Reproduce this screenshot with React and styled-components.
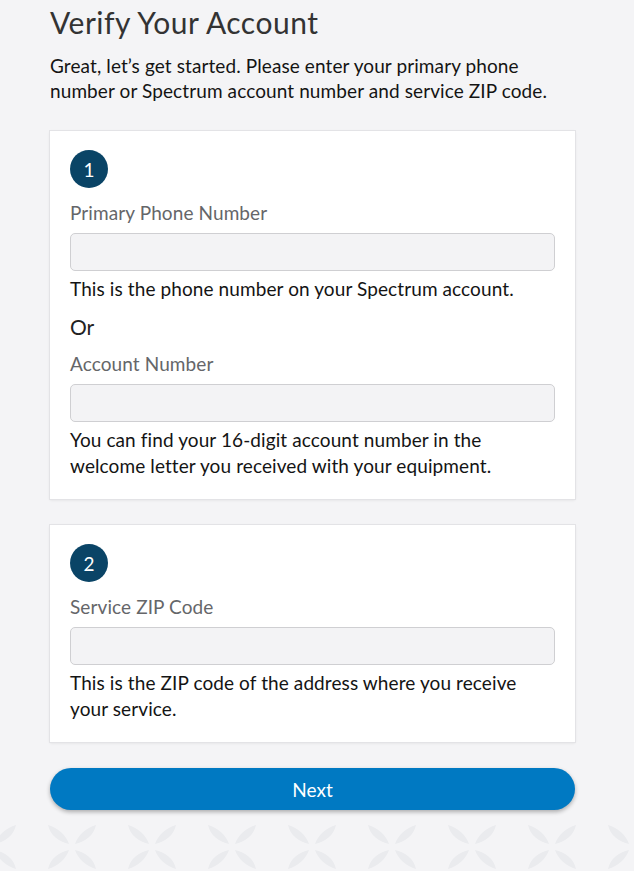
import React from "react";
import styled, { createGlobalStyle } from "styled-components";

const Global = createGlobalStyle`
  html, body { margin: 0; padding: 0; }
  body {
    background: #f4f4f6;
    font-family: Lato, "Open Sans", sans-serif;
    color: #1d1d1f;
    min-height: 871px;
  }
`;

const Page = styled.div`
  position: relative;
  min-height: 871px;
  overflow: hidden;
`;

const Pattern = styled.svg`
  position: absolute;
  left: 0;
  bottom: 0;
  width: 100%;
  height: 60px;
  z-index: 0;
`;

const Main = styled.main`
  position: relative;
  z-index: 1;
  width: 525px;
  padding: 4px 0 0 50px;
  display: flex;
  flex-direction: column;
`;

const Title = styled.h1`
  margin: 0;
  font-size: 30px;
  font-weight: 400;
  color: #333;
  line-height: 36px;
  letter-spacing: 0.5px;
`;

const Intro = styled.p`
  margin: 13px 0 0;
  font-size: 19px;
  line-height: 25px;
  letter-spacing: 0.1px;
  color: #141414;
`;

const Card = styled.section`
  margin-top: ${(p) => p.$top}px;
  background: #fff;
  box-shadow: 0 0 0 1px #e3e3e6, 0 1px 3px rgba(0, 0, 0, 0.1);
  padding: 19px 20px 20px;
  display: flex;
  flex-direction: column;
`;

const Step = styled.div`
  width: 38px;
  height: 38px;
  border-radius: 50%;
  background: #0a4466;
  color: #fff;
  font-size: 19px;
  display: flex;
  align-items: center;
  justify-content: center;
`;

const Label = styled.label`
  margin-top: 13px;
  font-size: 19px;
  line-height: 24px;
  letter-spacing: 0.1px;
  color: #656669;
`;

const Input = styled.input`
  margin-top: 8px;
  box-sizing: border-box;
  width: 100%;
  height: 38px;
  background: #f3f3f5;
  border: 1px solid #cfcfd2;
  border-radius: 5px;
  font: inherit;
  padding: 0 10px;
`;

const Help = styled.p`
  margin: 5px 0 0;
  font-size: 19px;
  line-height: 26px;
  letter-spacing: 0.1px;
  color: #141414;
`;

const Or = styled.div`
  margin-top: 13px;
  font-size: 21px;
  line-height: 24px;
  color: #222;
`;

const NextButton = styled.button`
  margin-top: 26px;
  height: 42px;
  border: none;
  border-radius: 21px;
  background: #0079c2;
  color: #fff;
  font-family: inherit;
  font-size: 19px;
  box-shadow: 0 2px 4px rgba(0, 0, 0, 0.3);
  cursor: pointer;
`;

const leafPath = "M0 0 C 3 -9, 11 -16, 21 -19 C 19 -9, 10 -2, 0 0 Z";

function Leaves() {
  return (
    <Pattern aria-hidden="true">
      <defs>
        <g id="leaf">
          <path d={leafPath} fill="#eaebee" />
        </g>
        <pattern id="xs" x="32" y="-1" width="80" height="80" patternUnits="userSpaceOnUse">
          <g transform="translate(40 37)">
            <use href="#leaf" transform="translate(3 -3)" />
            <use href="#leaf" transform="translate(-3 -3) scale(-1 1)" />
            <use href="#leaf" transform="translate(3 3) scale(1 -1)" />
            <use href="#leaf" transform="translate(-3 3) scale(-1 -1)" />
          </g>
        </pattern>
      </defs>
      <rect width="100%" height="100%" fill="url(#xs)" />
    </Pattern>
  );
}

export default function App() {
  return (
    <Page>
      <Global />
      <Leaves />
      <Main>
        <Title>Verify Your Account</Title>
        <Intro>
          Great, let’s get started. Please enter your primary phone number or Spectrum account number and service ZIP code.
        </Intro>
        <Card $top={28}>
          <Step>1</Step>
          <Label>Primary Phone Number</Label>
          <Input type="text" aria-label="Primary Phone Number" />
          <Help>This is the phone number on your Spectrum account.</Help>
          <Or>Or</Or>
          <Label>Account Number</Label>
          <Input type="text" aria-label="Account Number" />
          <Help>You can find your 16-digit account number in the welcome letter you received with your equipment.</Help>
        </Card>
        <Card $top={26}>
          <Step>2</Step>
          <Label>Service ZIP Code</Label>
          <Input type="text" aria-label="Service ZIP Code" />
          <Help>This is the ZIP code of the address where you receive your service.</Help>
        </Card>
        <NextButton type="button">Next</NextButton>
      </Main>
    </Page>
  );
}
